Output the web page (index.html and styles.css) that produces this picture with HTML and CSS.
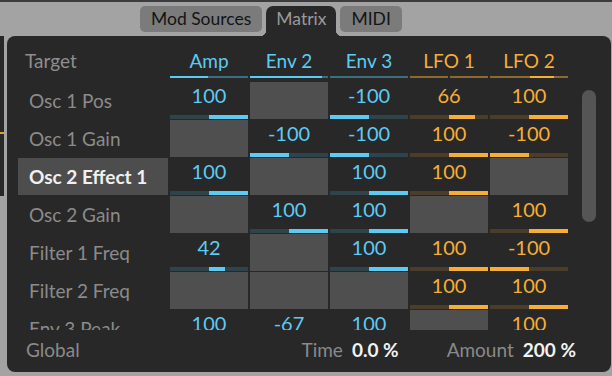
FILE: index.html
```html
<!DOCTYPE html>
<html lang="en">
<head>
    <meta charset="UTF-8">
    <meta name="viewport" content="width=device-width, initial-scale=1.0">
    <title>Mod Matrix</title>
    <link rel="stylesheet" href="styles.css">
</head>
<body>
    <div class="topline"></div>
    <div class="tabbar">
        <div class="tab">Mod Sources</div>
        <div class="tab active">Matrix</div>
        <div class="tab">MIDI</div>
    </div>

    <div class="stage">
        <div class="side-panel"><span class="side-tick"></span></div>

        <div class="panel">
            <div class="panel-main">
                <div class="matrix">
                    <div class="grid head">
                        <div class="target-title">Target</div>
                        <div class="src blue"><span>Amp</span><div class="line"><i style="left:0;width:49%"></i></div></div>
                        <div class="src blue"><span>Env 2</span><div class="line"><i style="left:0;width:92%"></i></div></div>
                        <div class="src blue"><span>Env 3</span><div class="line"></div></div>
                        <div class="src orange"><span>LFO 1</span><div class="line notch"></div></div>
                        <div class="src orange"><span>LFO 2</span><div class="line"><i style="left:51%;width:31%"></i></div></div>
                    </div>

                    <div class="rows">
                        <!-- Osc 1 Pos -->
                        <div class="grid row">
                            <div class="label">Osc 1 Pos</div>
                            <div class="cell blue"><span>100</span><div class="bar"><i style="left:50%;width:50%"></i></div></div>
                            <div class="cell empty"></div>
                            <div class="cell blue"><span>-100</span><div class="bar"><i style="left:0;width:50%"></i></div></div>
                            <div class="cell orange"><span>66</span><div class="bar"><i style="left:50%;width:33%"></i></div></div>
                            <div class="cell orange"><span>100</span><div class="bar"><i style="left:50%;width:50%"></i></div></div>
                        </div>
                        <!-- Osc 1 Gain -->
                        <div class="grid row">
                            <div class="label">Osc 1 Gain</div>
                            <div class="cell empty"></div>
                            <div class="cell blue"><span>-100</span><div class="bar"><i style="left:0;width:50%"></i></div></div>
                            <div class="cell blue"><span>-100</span><div class="bar"><i style="left:0;width:50%"></i></div></div>
                            <div class="cell orange"><span>100</span><div class="bar"><i style="left:50%;width:50%"></i></div></div>
                            <div class="cell orange"><span>-100</span><div class="bar"><i style="left:0;width:50%"></i></div></div>
                        </div>
                        <!-- Osc 2 Effect 1 -->
                        <div class="grid row">
                            <div class="label selected">Osc 2 Effect 1</div>
                            <div class="cell blue"><span>100</span><div class="bar"><i style="left:50%;width:50%"></i></div></div>
                            <div class="cell empty"></div>
                            <div class="cell blue"><span>100</span><div class="bar"><i style="left:50%;width:50%"></i></div></div>
                            <div class="cell orange"><span>100</span><div class="bar"><i style="left:50%;width:50%"></i></div></div>
                            <div class="cell empty"></div>
                        </div>
                        <!-- Osc 2 Gain -->
                        <div class="grid row">
                            <div class="label">Osc 2 Gain</div>
                            <div class="cell empty"></div>
                            <div class="cell blue"><span>100</span><div class="bar"><i style="left:50%;width:50%"></i></div></div>
                            <div class="cell blue"><span>100</span><div class="bar"><i style="left:50%;width:50%"></i></div></div>
                            <div class="cell empty"></div>
                            <div class="cell orange"><span>100</span><div class="bar"><i style="left:50%;width:50%"></i></div></div>
                        </div>
                        <!-- Filter 1 Freq -->
                        <div class="grid row">
                            <div class="label">Filter 1 Freq</div>
                            <div class="cell blue"><span>42</span><div class="bar"><i style="left:50%;width:21%"></i></div></div>
                            <div class="cell empty"></div>
                            <div class="cell blue"><span>100</span><div class="bar"><i style="left:50%;width:50%"></i></div></div>
                            <div class="cell orange"><span>100</span><div class="bar"><i style="left:50%;width:50%"></i></div></div>
                            <div class="cell orange"><span>-100</span><div class="bar"><i style="left:0;width:50%"></i></div></div>
                        </div>
                        <!-- Filter 2 Freq -->
                        <div class="grid row">
                            <div class="label">Filter 2 Freq</div>
                            <div class="cell empty"></div>
                            <div class="cell empty"></div>
                            <div class="cell empty"></div>
                            <div class="cell orange"><span>100</span><div class="bar"><i style="left:50%;width:50%"></i></div></div>
                            <div class="cell orange"><span>100</span><div class="bar"><i style="left:50%;width:50%"></i></div></div>
                        </div>
                        <!-- Env 3 Peak -->
                        <div class="grid row">
                            <div class="label">Env 3 Peak</div>
                            <div class="cell blue"><span>100</span><div class="bar"><i style="left:50%;width:50%"></i></div></div>
                            <div class="cell blue"><span>-67</span><div class="bar"><i style="left:16.5%;width:33.5%"></i></div></div>
                            <div class="cell blue"><span>100</span><div class="bar"><i style="left:50%;width:50%"></i></div></div>
                            <div class="cell empty"></div>
                            <div class="cell orange"><span>100</span><div class="bar"><i style="left:50%;width:50%"></i></div></div>
                        </div>
                    </div>
                </div>

                <div class="scroll"><div class="thumb"></div></div>
            </div>

            <div class="footer">
                <span class="foot-label">Global</span>
                <span class="spacer"></span>
                <span class="foot-label">Time</span>
                <span class="foot-value">0.0 %</span>
                <span class="foot-label amount">Amount</span>
                <span class="foot-value">200 %</span>
            </div>
        </div>
    </div>
</body>
</html>
```

FILE: styles.css
```css
body {
    margin: 0;
    width: 612px;
    height: 376px;
    overflow: hidden;
    background: #a3a3a3;
    font-family: Lato, "Open Sans", sans-serif;
    font-size: 19px;
}
.topline {
    height: 2px;
    background: #3c3c3c;
}

/* tabs */
.tabbar {
    display: flex;
    align-items: flex-start;
    gap: 3px;
    height: 30px;
    margin-top: 4px;
    padding-left: 140px;
    font-size: 17.5px;
}
.tab {
    height: 26px;
    line-height: 26px;
    padding: 0 11px;
    background: #7b7b7b;
    color: #141414;
    border-radius: 5px;
}
.tab.active {
    position: relative;
    height: 30px;
    line-height: 26px;
    padding: 0 10px;
    margin: 0 1px;
    background: #282828;
    color: #9a9a9a;
    border-radius: 7px 7px 0 0;
}
.tab.active::before,
.tab.active::after {
    content: "";
    position: absolute;
    bottom: 0;
    width: 6px;
    height: 6px;
}
.tab.active::before {
    left: -6px;
    background: radial-gradient(circle at 0 0, transparent 6px, #282828 6.5px);
}
.tab.active::after {
    right: -6px;
    background: radial-gradient(circle at 100% 0, transparent 6px, #282828 6.5px);
}

/* panels */
.stage {
    display: flex;
    gap: 3px;
    height: 336px;
}
.side-panel {
    position: relative;
    width: 4px;
    height: 160px;
    background: #282828;
}
.side-tick {
    position: absolute;
    left: 0;
    top: 96px;
    width: 4px;
    height: 2px;
    background: #e0a030;
}
.panel {
    width: 604px;
    display: flex;
    flex-direction: column;
    background: #282828;
    border-radius: 8px;
}
.panel-main {
    display: flex;
    padding: 8px 0 0 11px;
}

/* matrix */
.grid {
    display: grid;
    grid-template-columns: 150px repeat(5, 78px);
    column-gap: 2px;
}
.head {
    height: 34px;
    margin-bottom: 4px;
}
.target-title {
    padding: 5px 0 0 7px;
    color: #8e8e8e;
}
.src {
    display: flex;
    flex-direction: column;
    justify-content: space-between;
    align-items: center;
}
.src span {
    padding-top: 5px;
}
.line {
    position: relative;
    align-self: stretch;
    height: 2px;
}
.line i,
.bar i {
    position: absolute;
    top: 0;
    bottom: 0;
}
.blue { color: #5ccbf3; }
.orange { color: #f6ae34; }
.src.blue .line { background: #3d6e80; }
.src.orange .line { background: #8a6a30; }
.src.blue .line i { background: #5ccbf3; }
.src.orange .line i { background: #f6ae34; }
.line.notch::after {
    content: "";
    position: absolute;
    left: 38px;
    width: 2px;
    height: 2px;
    background: #282828;
}

.rows {
    display: grid;
    row-gap: 2px;
    height: 248px;
    overflow: hidden;
}
.row {
    height: 36px;
}
.label {
    padding-left: 11px;
    line-height: 37px;
    color: #8b8b8b;
    white-space: nowrap;
}
.label.selected {
    background: #4d4d4d;
    color: #f0f0f0;
    font-weight: 700;
}
.cell {
    display: flex;
    flex-direction: column;
    justify-content: space-between;
    align-items: center;
    font-size: 20px;
}
.cell span {
    line-height: 24px;
    padding-top: 1px;
}
.cell.empty {
    background: #4f4f4f;
}
.bar {
    position: relative;
    align-self: stretch;
    height: 4px;
}
.cell.blue .bar { background: #2f434b; }
.cell.orange .bar { background: #4a3d2a; }
.cell.blue .bar i { background: #5ccbf3; }
.cell.orange .bar i { background: #f6ae34; }

/* scroll bar */
.scroll {
    margin-left: 14px;
    padding-top: 46px;
}
.thumb {
    width: 14px;
    height: 132px;
    border-radius: 7px;
    background: #555555;
}

/* footer */
.footer {
    display: flex;
    align-items: center;
    flex: 1;
    padding: 0 35px 3px 19px;
}
.spacer {
    flex: 1;
}
.foot-label {
    color: #8a8a8a;
}
.foot-value {
    margin-left: 9px;
    color: #f2f2f2;
    font-weight: 700;
}
.foot-label.amount {
    margin-left: 48px;
}
```
